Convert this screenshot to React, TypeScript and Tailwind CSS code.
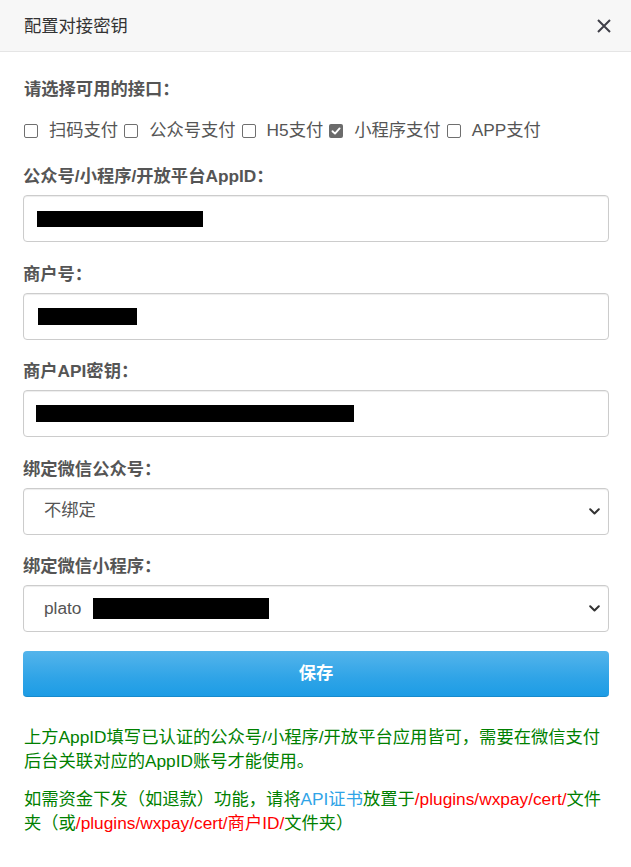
const font = { fontFamily: '"Liberation Sans", "Noto Sans CJK SC", sans-serif' };

const options = [
  { label: "扫码支付", checked: false },
  { label: "公众号支付", checked: false },
  { label: "H5支付", checked: false },
  { label: "小程序支付", checked: true },
  { label: "APP支付", checked: false },
];

const Checkbox = ({ checked }: { checked: boolean }) =>
  checked ? (
    <span className="flex h-[14px] w-[14px] items-center justify-center rounded-[2px] bg-[#6b6b6b]">
      <svg width="10" height="10" viewBox="0 0 10 10" fill="none">
        <path d="M1.5 5.2 4 7.6 8.6 2.4" stroke="#fff" strokeWidth="1.9" strokeLinecap="round" strokeLinejoin="round" />
      </svg>
    </span>
  ) : (
    <span className="h-[14px] w-[14px] rounded-[2px] border border-[#6f6f6f] bg-white" />
  );

const Chevron = () => (
  <svg width="11" height="7" viewBox="0 0 11 7" fill="none">
    <path d="M1.2 1.2 5.5 5.5 9.8 1.2" stroke="#333" strokeWidth="2" strokeLinecap="round" strokeLinejoin="round" />
  </svg>
);

const boxClass =
  "flex h-[47px] w-full items-center rounded-[4px] border border-[#cccccc] bg-white shadow-[inset_0_1px_1px_rgba(0,0,0,0.075)]";

const Field = ({ label, children }: { label: string; children: React.ReactNode }) => (
  <div className="mb-[19.5px]">
    <p className="mb-[7px] text-[17.3px] font-bold leading-[24px] text-[#555]">{label}</p>
    {children}
  </div>
);

const App = () => {
  return (
    <div className="min-h-[867px] w-[631px] bg-white" style={font}>
      <div className="flex h-[52px] items-center justify-between border-b border-[#e5e5e5] bg-[#f7f7f7] pl-[24px] pr-[20px]">
        <h3 className="text-[17.3px] leading-[24px] text-[#333]">配置对接密钥</h3>
        <svg width="14" height="14" viewBox="0 0 14 14" fill="none">
          <path d="M1 1 13 13M13 1 1 13" stroke="#3f3f48" strokeWidth="2" />
        </svg>
      </div>

      <div className="pl-[23px] pr-[22px] pt-[25px]">
        <p className="mb-[18px] pl-[1px] text-[17.3px] font-bold leading-[24px] text-[#555]">请选择可用的接口：</p>

        <div className="mb-[21px] flex h-[24px] items-center pl-[1px] text-[17.3px] text-[#555]">
          {options.map((o) => (
            <label key={o.label} className="mr-[6px] flex items-center gap-[11px]">
              <Checkbox checked={o.checked} />
              <span>{o.label}</span>
            </label>
          ))}
        </div>

        <Field label="公众号/小程序/开放平台AppID：">
          <div className={boxClass + " pl-[13px]"}>
            <span className="h-[16px] w-[166px] bg-black" />
          </div>
        </Field>

        <Field label="商户号：">
          <div className={boxClass + " pl-[14px]"}>
            <span className="h-[17px] w-[99px] bg-black" />
          </div>
        </Field>

        <Field label="商户API密钥：">
          <div className={boxClass + " pl-[12px]"}>
            <span className="h-[17px] w-[318px] bg-black" />
          </div>
        </Field>

        <Field label="绑定微信公众号：">
          <div className={boxClass + " justify-between pl-[20px] pr-[8px] text-[17.3px] text-[#555]"}>
            <span>不绑定</span>
            <Chevron />
          </div>
        </Field>

        <div>
          <p className="mb-[7px] text-[17.3px] font-bold leading-[24px] text-[#555]">绑定微信小程序：</p>
          <div className={boxClass + " justify-between pl-[20px] pr-[8px] text-[17.3px] text-[#555]"}>
            <span className="flex items-center">
              plato
              <span className="ml-[12px] h-[21px] w-[176px] bg-black" />
            </span>
            <Chevron />
          </div>
        </div>

        <button className="mt-[19px] flex h-[46px] w-full items-center justify-center rounded-[4px] border-b border-[#178acc] bg-[linear-gradient(#54b4eb,#2fa4e7_60%,#1d9ce5)] text-[17.3px] font-bold text-white">
          保存
        </button>

        <div className="mt-[28px] pl-[1px] text-[17.3px] leading-[24px] text-[#008000]">
          <p>上方AppID填写已认证的公众号/小程序/开放平台应用皆可，需要在微信支付后台关联对应的AppID账号才能使用。</p>
          <p className="mt-[14px]">
            如需资金下发（如退款）功能，请将<span className="text-[#2fa4e7]">API证书</span>放置于
            <span className="text-[#ff0000]">/plugins/wxpay/cert/</span>文件夹（或
            <span className="text-[#ff0000]">/plugins/wxpay/cert/商户ID/</span>文件夹）
          </p>
        </div>
      </div>
    </div>
  );
};

export default App;
